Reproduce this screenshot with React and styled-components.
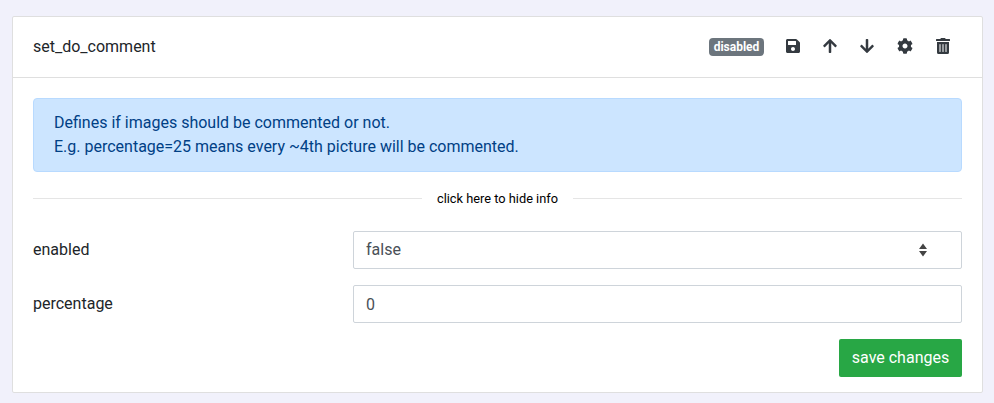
import React from "react";
import styled, { createGlobalStyle } from "styled-components";
import { FaSave, FaArrowUp, FaArrowDown, FaCog, FaTrashAlt } from "react-icons/fa";

const GlobalStyle = createGlobalStyle`
  *, *::before, *::after { box-sizing: border-box; }
  body {
    margin: 0;
    background: #f1f1fb;
    color: #212529;
    font: 400 16px/1.5 Roboto, sans-serif;
  }
`;

const Page = styled.main`
  height: 403px;
  padding: 16px 11px 10px 12px;
`;

const Card = styled.section`
  height: 377px;
  border: 1px solid #dfdfdf;
  border-radius: 2px;
  background: #fff;
`;

const Header = styled.header`
  display: flex;
  align-items: center;
  height: 61px;
  padding: 0 20px;
  border-bottom: 1px solid #dfdfdf;
`;

const Title = styled.span`
  flex: 1;
`;

const Badge = styled.span`
  height: 18px;
  width: 55px;
  margin-right: 10px;
  border-radius: 4px;
  background: #6c757d;
  color: #fff;
  font-size: 12px;
  font-weight: 700;
  line-height: 18px;
  text-align: center;
`;

const Toolbar = styled.div`
  display: grid;
  grid-template-columns: 38px 36px 38px 38px 38px;
`;

const IconButton = styled.button`
  display: flex;
  align-items: center;
  justify-content: center;
  height: 38px;
  padding: 0 0 2px;
  border: 0;
  background: none;
  color: #343a40;
`;

const Body = styled.div`
  padding: 20px;
`;

const Info = styled.div`
  height: 74px;
  padding: 12px 20px;
  border: 1px solid #b8daff;
  border-radius: 4px;
  background: #cce5ff;
  color: #004085;
`;

const Divider = styled.div`
  display: flex;
  align-items: center;
  gap: 15px;
  height: 19px;
  margin: 17px 0 23px;
  color: #000;
  font-size: 12.8px;
  line-height: 19px;

  &::before, &::after {
    content: "";
    flex: 1;
    height: 1px;
    background: #e5e5e5;
  }
`;

const Row = styled.div`
  display: flex;
  align-items: center;
  height: 38px;
  margin-bottom: 16px;
`;

const Label = styled.label`
  width: 320px;
`;

const Select = styled.div`
  display: flex;
  flex: 1;
  align-items: center;
  justify-content: space-between;
  height: 38px;
  padding: 0 34px 0 12px;
  border: 1px solid #ced4da;
  border-radius: 2px;
  color: #495057;
`;

const Input = styled.input`
  flex: 1;
  height: 38px;
  padding: 6px 12px;
  border: 1px solid #ced4da;
  border-radius: 2px;
  background: #fff;
  color: #495057;
  font: inherit;
`;

const Actions = styled.div`
  display: flex;
  justify-content: flex-end;
`;

const SaveButton = styled.button`
  width: 123px;
  height: 38px;
  padding: 0;
  border: 0;
  border-radius: 2px;
  background: #28a745;
  color: #fff;
  font: inherit;
`;

const Sorter = () => (
  <svg width="8" height="14" viewBox="0 0 8 14" fill="#444">
    <path d="M0 6 4 0.5 8 6zM0 8h8L4 13.5z" />
  </svg>
);

export default function App() {
  return (
    <>
      <GlobalStyle />
      <Page>
        <Card>
          <Header>
            <Title>set_do_comment</Title>
            <Badge>disabled</Badge>
            <Toolbar>
              <IconButton><FaSave size={16} /></IconButton>
              <IconButton><FaArrowUp size={16} /></IconButton>
              <IconButton><FaArrowDown size={16} /></IconButton>
              <IconButton><FaCog size={16} /></IconButton>
              <IconButton><FaTrashAlt size={16} /></IconButton>
            </Toolbar>
          </Header>
          <Body>
            <Info>
              Defines if images should be commented or not.
              <br />
              E.g. percentage=25 means every ~4th picture will be commented.
            </Info>
            <Divider>click here to hide info</Divider>
            <Row>
              <Label>enabled</Label>
              <Select>false<Sorter /></Select>
            </Row>
            <Row>
              <Label htmlFor="percentage">percentage</Label>
              <Input id="percentage" defaultValue="0" />
            </Row>
            <Actions>
              <SaveButton>save changes</SaveButton>
            </Actions>
          </Body>
        </Card>
      </Page>
    </>
  );
}
